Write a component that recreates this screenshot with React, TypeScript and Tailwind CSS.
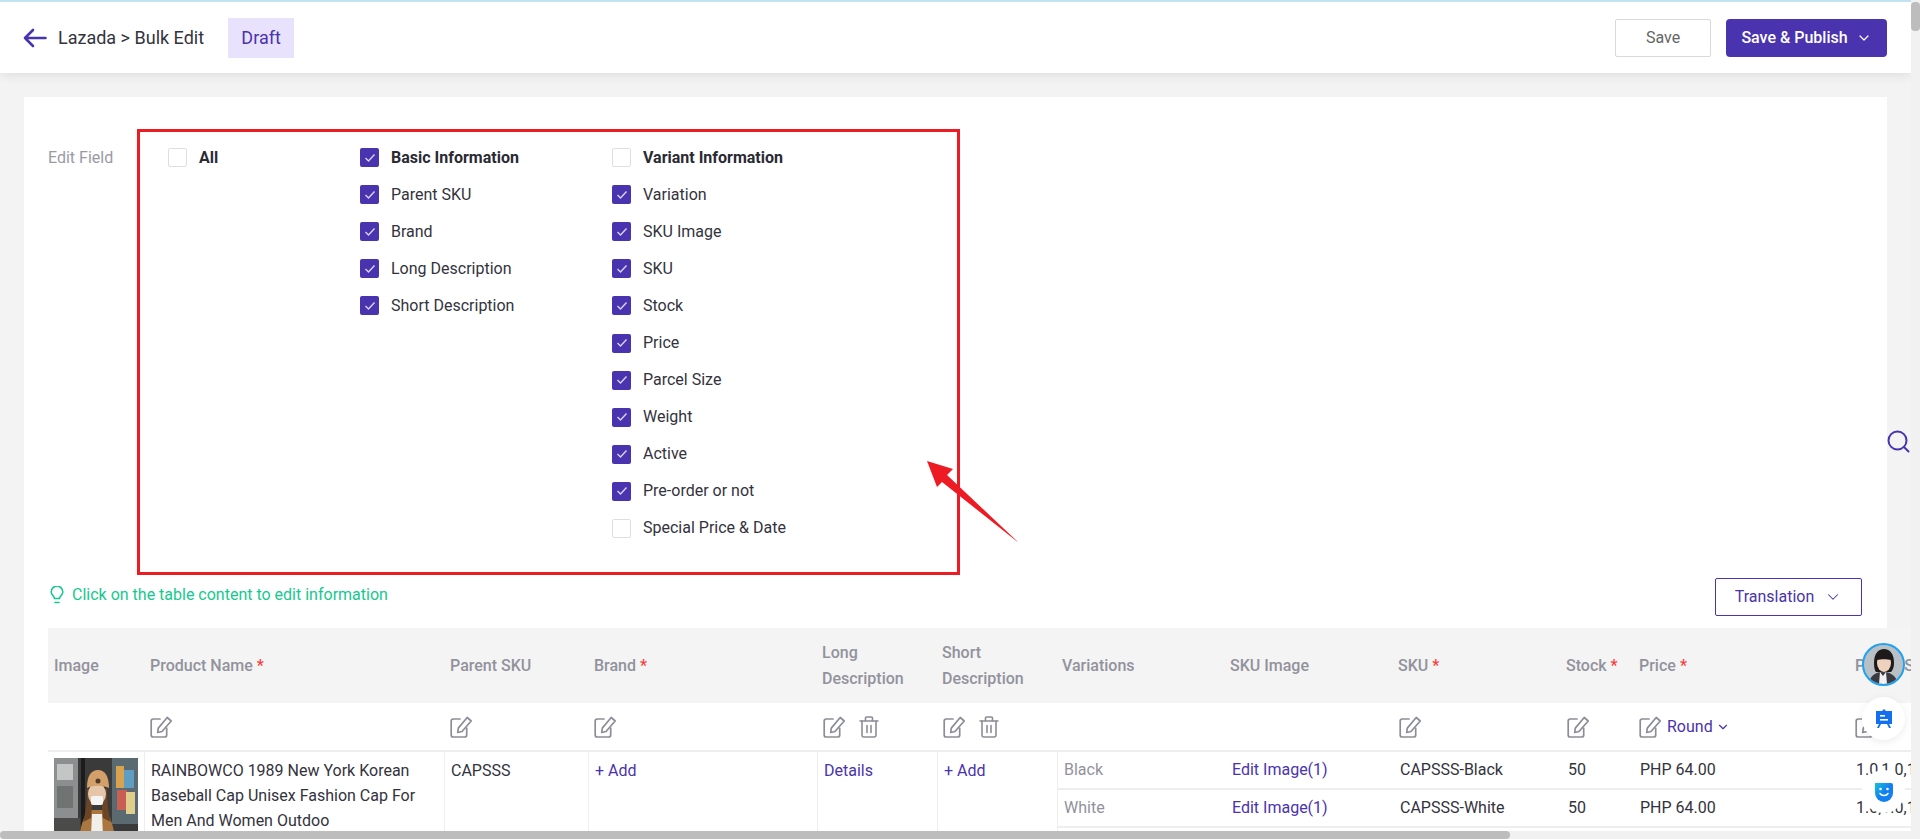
import React from "react";
import { ChevronDown } from "lucide-react";

const PURPLE = "#4a33ae";

function Check({ on }: { on: boolean }) {
  return on ? (
    <span className="flex h-[19px] w-[19px] shrink-0 items-center justify-center rounded-[2px] bg-[#4a33ae]">
      <svg width="12" height="10" viewBox="0 0 12 10" fill="none">
        <path d="M1.5 5l3 3 6-6.5" stroke="#d9d4f2" strokeWidth="1.4" />
      </svg>
    </span>
  ) : (
    <span className="h-[19px] w-[19px] shrink-0 rounded-[2px] border border-[#dcdfe6] bg-white" />
  );
}

function Field({ label, on, bold }: { label: string; on: boolean; bold?: boolean }) {
  return (
    <div className="flex h-[37.1px] items-center gap-3">
      <Check on={on} />
      <span className={bold ? "text-base font-bold text-[#2a2a33]" : "text-base text-[#33333d]"}>{label}</span>
    </div>
  );
}

function EditIcon() {
  return (
    <svg width="23" height="22" viewBox="0 0 23 22" fill="none" stroke="#8d8d97" strokeWidth="1.7" strokeLinejoin="round" strokeLinecap="round">
      <path d="M10 3H3.2A2 2 0 0 0 1.2 5v14a2 2 0 0 0 2 2h11.5a2 2 0 0 0 2-2v-7" />
      <path d="M17.2 1.5l4 3.5-9.2 10.5-4.3 1 .6-4.4z" />
    </svg>
  );
}

function TrashIcon() {
  return (
    <svg width="20" height="22" viewBox="0 0 20 22" fill="none" stroke="#8d8d97" strokeWidth="1.6" strokeLinejoin="round" strokeLinecap="round">
      <path d="M1 5h18" />
      <path d="M6.5 5V2a1 1 0 0 1 1-1h5a1 1 0 0 1 1 1v3" />
      <path d="M3 5v14a2 2 0 0 0 2 2h10a2 2 0 0 0 2-2V5" />
      <path d="M8 9.5v7M12 9.5v7" />
    </svg>
  );
}

function Star() {
  return <span className="ml-1 text-[#ff3b3b]">*</span>;
}

function Thumb() {
  return (
    <div className="relative h-[100px] w-[84px] overflow-hidden bg-[#2d2a28]">
      <svg width="84" height="100" viewBox="0 0 84 100" className="block">
        <rect width="84" height="100" fill="#3a3a3a" />
        <rect x="0" y="0" width="24" height="60" fill="#8c8f90" />
        <rect x="3" y="6" width="16" height="16" fill="#c4c6c5" />
        <rect x="3" y="28" width="16" height="22" fill="#6f7473" />
        <rect x="27" y="0" width="4" height="70" fill="#1c1c1c" />
        <rect x="58" y="0" width="26" height="66" fill="#5a6a70" />
        <rect x="62" y="8" width="8" height="22" fill="#d9a24f" />
        <rect x="70" y="12" width="10" height="18" fill="#5f9ec2" />
        <rect x="63" y="32" width="10" height="20" fill="#c85f55" />
        <rect x="72" y="34" width="9" height="22" fill="#e0cf8c" />
        <rect x="0" y="60" width="26" height="40" fill="#4b4b4a" />
        <path d="M24 100c0-24 4-42 12-48h14c8 6 12 24 12 48z" fill="#a9773f" />
        <path d="M38 56h10l2 44H36z" fill="#f1efe9" />
        <path d="M33 30c0 14-1 24-4 34l8-4 2-24zM53 30c0 14 1 24 4 34l-8-4-2-24z" fill="#6b4526" />
        <ellipse cx="43" cy="36" rx="9" ry="11" fill="#e6c6a8" />
        <rect x="37" y="38" width="12" height="9" rx="2" fill="#f4f4f4" />
        <path d="M33 30c0-12 4-18 11-18s11 6 11 18c-7-3-15-3-22 0z" fill="#d3a06a" />
        <circle cx="44" cy="23" r="2.5" fill="#4f3a2a" />
      </svg>
      <div className="absolute inset-x-0 bottom-0 flex h-[20px] items-center justify-center gap-3 bg-black/60 pl-1 text-white">
        <svg width="15" height="15" viewBox="0 0 23 22" fill="none" stroke="#fff" strokeWidth="2.2" strokeLinejoin="round" strokeLinecap="round">
          <path d="M10 3H3.2A2 2 0 0 0 1.2 5v14a2 2 0 0 0 2 2h11.5a2 2 0 0 0 2-2v-7" />
          <path d="M17.2 1.5l4 3.5-9.2 10.5-4.3 1 .6-4.4z" />
        </svg>
        <span className="text-base leading-none">(8)</span>
      </div>
    </div>
  );
}

const basic = ["Parent SKU", "Brand", "Long Description", "Short Description"];
const variant: [string, boolean][] = [
  ["Variation", true],
  ["SKU Image", true],
  ["SKU", true],
  ["Stock", true],
  ["Price", true],
  ["Parcel Size", true],
  ["Weight", true],
  ["Active", true],
  ["Pre-order or not", true],
  ["Special Price & Date", false],
];

const cols = "grid grid-cols-[96px_300px_144px_229px_120px_120px_168px_168px_168px_72px_216px_160px]";

export default function App() {
  return (
    <div className="relative flex h-[839px] w-full flex-col overflow-hidden bg-[#f3f3f3] font-['Roboto',sans-serif] text-base text-[#33333d]">
      <div className="flex min-h-0 flex-1">
        <div className="flex min-w-0 flex-1 flex-col">
          <div className="border-t-2 border-[#c2e2f2] bg-white shadow-[0_2px_10px_rgba(0,0,0,0.09)]">
            <header className="flex h-[71px] items-center pl-[23px] pr-6">
              <svg width="24" height="20" viewBox="0 0 24 20" fill="none" stroke={PURPLE} strokeWidth="2.6" strokeLinecap="round" strokeLinejoin="round">
                <path d="M22.5 10H2M10 2l-8 8 8 8" />
              </svg>
              <span className="ml-[11px] text-[18px] text-[#33333d]">Lazada &gt; Bulk Edit</span>
              <span className="ml-6 flex h-10 w-[66px] items-center justify-center bg-[#e9e2fc] text-[18px] text-[#4a33ae]">Draft</span>
              <button className="ml-auto h-[38px] w-[96px] rounded-[2px] border border-[#d9d9d9] bg-white text-base text-[#666666]">Save</button>
              <button className="ml-[15px] flex h-[38px] w-[161px] items-center justify-center gap-2 rounded-[4px] bg-[#4a33ae] text-base font-medium text-white">
                Save &amp; Publish
                <ChevronDown size={16} strokeWidth={1.8} />
              </button>
            </header>
          </div>

          <main className="min-h-0 flex-1 overflow-hidden pl-6 pt-6">
            <div className="relative w-[1863px] bg-white pl-6 pt-8">
              <div className="flex">
                <div className="w-[89px] pt-[17px] text-base text-[#9a9aa4]">Edit Field</div>
                <div className="flex h-[446px] w-[823px] border-[3px] border-[#ed1c24] pl-[28px] pt-[7px]">
                  <div className="w-[192px]">
                    <Field label="All" on={false} bold />
                  </div>
                  <div className="w-[252px]">
                    <Field label="Basic Information" on bold />
                    {basic.map((b) => (
                      <Field key={b} label={b} on />
                    ))}
                  </div>
                  <div>
                    <Field label="Variant Information" on={false} bold />
                    {variant.map(([l, o]) => (
                      <Field key={l} label={l} on={o} />
                    ))}
                  </div>
                </div>
              </div>

              <svg className="pointer-events-none absolute left-[900px] top-[361px]" width="120" height="85" viewBox="0 0 120 85">
                <polygon points="3,3 29,11 23,17 95,85 18,24 13,29" fill="#ed1c24" />
              </svg>

              <div className="flex h-[53px] items-start pr-[25px]">
                <div className="mt-[8px] flex items-center gap-[8px] text-base text-[#14c98e]">
                  <svg className="ml-[2px]" width="14" height="18" viewBox="0 0 14 18" fill="none" stroke="#14c98e" strokeWidth="1.6" strokeLinecap="round">
                    <path d="M4.5 12.5C4.5 10 1.2 9.2 1.2 6a5.8 5.8 0 0 1 11.6 0c0 3.2-3.3 4-3.3 6.5z" />
                    <path d="M5 16.5h4" />
                  </svg>
                  Click on the table content to edit information
                </div>
                <button className="ml-auto mt-[3px] flex h-[38px] w-[147px] items-center justify-center gap-[10px] rounded-[2px] border border-[#4a33ae] text-base text-[#4a33ae]">
                  Translation
                  <ChevronDown size={18} strokeWidth={1.4} />
                </button>
              </div>

              <div className="w-[1863px]">
                <div className={`${cols} h-[75px] items-center bg-[#f4f4f4] text-base font-medium leading-[26px] text-[#92929c]`}>
                  <div className="pl-[6px]">Image</div>
                  <div className="pl-[6px]">Product Name<Star /></div>
                  <div className="pl-[6px]">Parent SKU</div>
                  <div className="pl-[6px]">Brand<Star /></div>
                  <div className="pl-[5px]">Long Description</div>
                  <div className="pl-[5px] pr-[6px]">Short Description</div>
                  <div className="pl-[5px]">Variations</div>
                  <div className="pl-[5px]">SKU Image</div>
                  <div className="pl-[5px]">SKU<Star /></div>
                  <div className="pl-[5px]">Stock<Star /></div>
                  <div className="pl-[6px]">Price<Star /></div>
                  <div className="pl-[6px]">Parcel Size (cm)</div>
                </div>

                <div className={`${cols} h-[49px] items-center border-b-2 border-[#eeeeee] bg-white`}>
                  <div />
                  <div className="pl-[6px]"><EditIcon /></div>
                  <div className="pl-[6px]"><EditIcon /></div>
                  <div className="pl-[6px]"><EditIcon /></div>
                  <div className="flex items-center gap-[13px] pl-[6px]"><EditIcon /><TrashIcon /></div>
                  <div className="flex items-center gap-[13px] pl-[6px]"><EditIcon /><TrashIcon /></div>
                  <div />
                  <div />
                  <div className="pl-[6px]"><EditIcon /></div>
                  <div className="pl-[6px]"><EditIcon /></div>
                  <div className="flex items-center gap-[5px] pl-[6px] text-[#4a33ae]">
                    <EditIcon />
                    Round
                    <ChevronDown size={14} strokeWidth={2} className="-ml-[2px]" />
                  </div>
                  <div className="pl-[6px]"><EditIcon /></div>
                </div>

                <div className={`${cols} bg-white leading-[25px]`}>
                  <div className="px-[6px] pt-[6px]"><Thumb /></div>
                  <div className="border-l border-[#eeeeee] px-[6px] pt-[6px]">RAINBOWCO 1989 New York Korean Baseball Cap Unisex Fashion Cap For Men And Women Outdoo</div>
                  <div className="border-l border-[#eeeeee] px-[6px] pt-[6px]">CAPSSS</div>
                  <div className="border-l border-[#eeeeee] px-[6px] pt-[6px] text-[#4a33ae]">+ Add</div>
                  <div className="border-l border-[#eeeeee] px-[6px] pt-[6px] text-[#4a33ae]">Details</div>
                  <div className="border-l border-[#eeeeee] px-[6px] pt-[6px] text-[#4a33ae]">+ Add</div>
                  <div className="col-span-6 border-l border-[#eeeeee]">
                    {["Black", "White"].map((c) => (
                      <div key={c} className="grid h-[38px] grid-cols-[168px_168px_168px_72px_216px_160px] border-b-2 border-[#eeeeee] pt-[5px]">
                        <div className="pl-[6px] text-[#92929c]">{c}</div>
                        <div className="pl-[6px] text-[#4a33ae]">Edit Image(1)</div>
                        <div className="pl-[6px]">CAPSSS-{c}</div>
                        <div className="pl-[6px]">50</div>
                        <div className="pl-[6px]">PHP 64.00</div>
                        <div className="pl-[6px] whitespace-nowrap">1.0,1.0,1.0</div>
                      </div>
                    ))}
                    <div className="h-[38px]" />
                  </div>
                </div>
              </div>
            </div>
          </main>
        </div>

        <div className="w-[9px] shrink-0 bg-[#f1f1f1]">
          <div className="mt-[2px] h-[29px] w-[9px] rounded-[4px] bg-[#bdbdbd]" />
        </div>
      </div>

      <div className="h-2 shrink-0 bg-[#f1f1f1]">
        <div className="h-2 w-[1510px] rounded-[4px] bg-[#bdbdbd]" />
      </div>

      <svg className="absolute left-[1887px] top-[430px]" width="24" height="24" viewBox="0 0 24 24" fill="none" stroke={PURPLE} strokeWidth="2" strokeLinecap="round">
        <circle cx="10.5" cy="10.5" r="9" />
        <path d="M17 17l4.5 4.5" />
      </svg>

      <div className="absolute left-[1862px] top-[643px] h-[43px] w-[43px] overflow-hidden rounded-full border-2 border-[#1fa2f0] bg-[#b8c0c6]">
        <svg width="39" height="39" viewBox="0 0 39 39">
          <path d="M5 39c1-9 7-12 14-12s13 3 15 12z" fill="#3a3a40" />
          <path d="M16 27l3 4 3-4 1 12h-8z" fill="#f1f1f1" />
          <path d="M10 18c0-9 4-14 10-14s10 5 10 14c0 5-2 8-3 9H12c-1-1-2-4-2-9z" fill="#1e1a1a" />
          <ellipse cx="20" cy="18" rx="7" ry="9" fill="#efd2be" />
          <path d="M13 15c1-5 4-7 7-7s6 2 7 7c-4-1-10-1-14 0z" fill="#1e1a1a" />
        </svg>
      </div>

      <div className="absolute left-[1862px] top-[697px] flex h-[43px] w-[43px] items-center justify-center rounded-full bg-white shadow-[0_2px_8px_rgba(0,0,0,0.08)]">
        <svg width="18" height="20" viewBox="0 0 18 20">
          <path d="M9 0l2 2h6v13h-3l2 4h-2l-2-4H6l-2 4H2l2-4H1V2h6z" fill="#1270f0" />
          <rect x="5" y="6" width="5" height="1.6" fill="#fff" />
          <rect x="5" y="10" width="8" height="1.6" fill="#fff" />
        </svg>
      </div>

      <div className="absolute left-[1862px] top-[770px] flex h-[43px] w-[43px] items-center justify-center rounded-full bg-white">
        <svg width="20" height="20" viewBox="0 0 20 20">
          <defs>
            <linearGradient id="sm" x1="0" y1="0" x2="1" y2="1">
              <stop offset="0" stopColor="#17c4d8" />
              <stop offset="0.5" stopColor="#1280f0" />
            </linearGradient>
          </defs>
          <path d="M1 1h16a2 2 0 0 1 2 2v8a8.5 8.5 0 0 1-18 0z" fill="url(#sm)" />
          <circle cx="6.5" cy="7" r="1.3" fill="#fff" />
          <circle cx="13.5" cy="7" r="1.3" fill="#fff" />
          <path d="M6 11.5c1.5 2.5 6.5 2.5 8 0" stroke="#fff" strokeWidth="1.5" fill="none" strokeLinecap="round" />
        </svg>
      </div>
    </div>
  );
}
